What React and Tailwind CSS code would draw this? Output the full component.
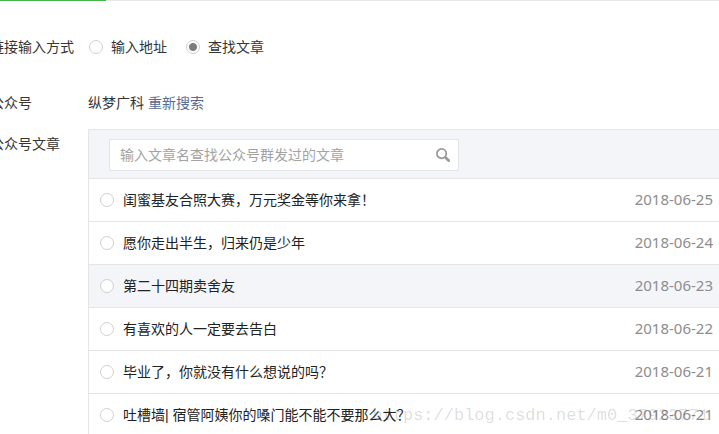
import React from "react";
import { useState } from "react";

const articles = [
  { id: 1, title: "闺蜜基友合照大赛，万元奖金等你来拿！", date: "2018-06-25" },
  { id: 2, title: "愿你走出半生，归来仍是少年", date: "2018-06-24" },
  { id: 3, title: "第二十四期卖舍友", date: "2018-06-23" },
  { id: 4, title: "有喜欢的人一定要去告白", date: "2018-06-22" },
  { id: 5, title: "毕业了，你就没有什么想说的吗？", date: "2018-06-21" },
  { id: 6, title: "吐槽墙| 宿管阿姨你的嗓门能不能不要那么大？", date: "2018-06-21" },
];

// Round radio used by the mode switch and the article rows
const Radio = (props) => (
  <input
    type="radio"
    className="size-3.5 shrink-0 appearance-none rounded-full border border-[#d0d0d0] bg-white bg-clip-padding checked:bg-[radial-gradient(circle,#7d7d7d_3.5px,white_4.5px)]"
    {...props}
  />
);

const SearchIcon = () => (
  <svg viewBox="0 0 14 14" className="size-3.5" fill="none" stroke="#999">
    <circle cx="5.6" cy="5.6" r="4.7" strokeWidth="1.8" />
    <path d="M8.8 8.8l1.7 1.7" strokeWidth="2" />
    <path d="M10.3 10.3l2.3 2.3" strokeWidth="2.8" strokeLinecap="round" />
  </svg>
);

export default function App() {
  const [mode, setMode] = useState("search");
  const [selected, setSelected] = useState(null);

  return (
    <div className="relative h-screen overflow-hidden bg-white font-['Liberation_Sans','Noto_Sans_CJK_SC',sans-serif] text-sm leading-5 text-[#353535]">
      {/* Tab underline */}
      <div className="h-px bg-[#e7e7eb]">
        <div className="h-px w-[106px] bg-[#44b549]" />
      </div>

      {/* The form runs slightly past the left edge */}
      <div className="-ml-2.5">
        <div role="radiogroup" aria-labelledby="mode-label" className="flex items-center pt-9">
          <span id="mode-label" className="w-[99px] shrink-0">链接输入方式</span>
          <div className="flex gap-[19px]">
            <label className="flex items-center gap-2">
              <Radio name="mode" checked={mode === "address"} onChange={() => setMode("address")} />
              输入地址
            </label>
            <label className="flex items-center gap-2">
              <Radio name="mode" checked={mode === "search"} onChange={() => setMode("search")} />
              查找文章
            </label>
          </div>
        </div>

        <div className="flex pt-9">
          <span className="w-[98px] shrink-0">公众号</span>
          <div className="flex gap-1">
            纵梦广科
            <a href="#" className="text-[#576b95]">重新搜索</a>
          </div>
        </div>

        <div className="flex pt-4">
          <label htmlFor="keyword" className="w-[98px] shrink-0 pt-[5px]">公众号文章</label>
          <div className="min-w-0 flex-1 border-t border-l border-[#e4e5e9]">
            <div className="bg-[#f4f5f9] pt-[9px] pb-[7px] pl-5">
              <div className="flex h-8 w-[350px] items-center border border-[#e4e5e9] bg-white pr-2 pl-2.5">
                <input
                  id="keyword"
                  type="text"
                  placeholder="输入文章名查找公众号群发过的文章"
                  className="min-w-0 flex-1 outline-none placeholder:text-[#a3a3a3]"
                />
                <button type="button" aria-label="搜索">
                  <SearchIcon />
                </button>
              </div>
            </div>

            {/* Article list */}
            <ul>
              {articles.map((article) => (
                <li
                  key={article.id}
                  className={
                    article.id === 3
                      ? "border-t border-[#e4e5e9] bg-[#f4f5f9]"
                      : "border-t border-[#e4e5e9]"
                  }
                >
                  <label className="flex h-[42px] items-center gap-[9px] pr-1.5 pl-[11px] text-[#222]">
                    <Radio
                      name="article"
                      checked={selected === article.id}
                      onChange={() => setSelected(article.id)}
                    />
                    <span className="flex-1 truncate">{article.title}</span>
                    <span className="pb-0.5 font-['Noto_Sans',sans-serif] text-[15px] text-[#8d8d8d]">{article.date}</span>
                  </label>
                </li>
              ))}
            </ul>
          </div>
        </div>
      </div>

      {/* Watermark */}
      <div className="pointer-events-none absolute right-2.5 bottom-2 font-['Liberation_Mono',monospace] text-[17px] text-black/15">
        https://blog.csdn.net/m0_37923771
      </div>
    </div>
  );
}
